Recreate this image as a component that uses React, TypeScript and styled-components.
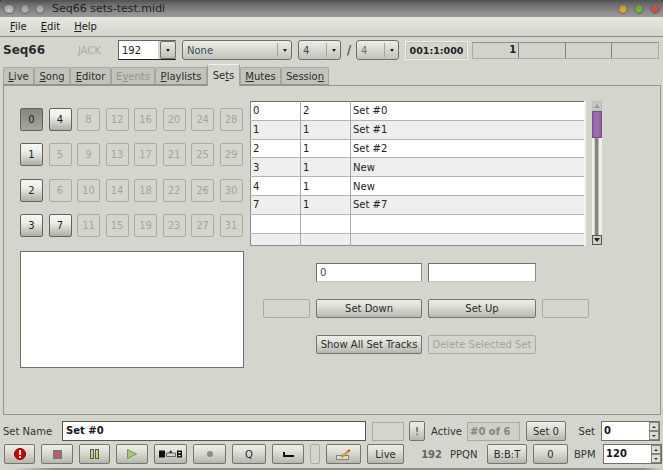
import React from 'react';
import styled, { createGlobalStyle } from 'styled-components';

const GlobalStyle = createGlobalStyle`
  html, body {
    margin: 0;
    padding: 0;
    background: #3c3c3a;
  }
  * {
    box-sizing: border-box;
  }
`;

const Window = styled.div`
  width: 663px;
  height: 470px;
  background: #d4d6ce;
  font-family: 'DejaVu Sans', sans-serif;
  font-size: 10px;
  color: #2e3436;
  border-radius: 5px 5px 0 0;
  overflow: hidden;
  display: flex;
  flex-direction: column;
`;

const TitleBar = styled.div`
  height: 17px;
  display: flex;
  align-items: center;
  padding: 0 3px;
  background: linear-gradient(#505050, #6c6c6c 25%, #8c8c8c 70%, #999);
  font-size: 11px;
  color: #1d1d1d;
`;

const DotGroup = styled.div<{ $gap: number }>`
  display: flex;
  gap: ${(p) => p.$gap}px;
`;

const TitleDot = styled.span<{ $w?: number; $color: string }>`
  width: ${(p) => p.$w ?? 10}px;
  height: 10px;
  border-radius: 5px;
  border: 1px solid #666;
  background: radial-gradient(circle at 50% 70%, ${(p) => p.$color}, #777 130%);
`;

const TitleText = styled.span`
  margin-left: 7px;
  flex: 1;
`;

const MenuBar = styled.div`
  height: 20px;
  display: flex;
  align-items: center;
  gap: 14px;
  padding: 0 10px;
  background: linear-gradient(#e6e7e1, #d3d5cc);
  border-bottom: 1px solid #8a8c85;
  color: #20201e;
`;

const TopRow = styled.div`
  height: 26px;
  display: flex;
  align-items: center;
`;

const AppName = styled.div`
  width: 75px;
  padding-left: 3px;
  font-size: 12px;
  font-weight: bold;
  color: #2b2b2b;
`;

const JackLabel = styled.div`
  width: 43px;
  color: #a9aba4;
  padding-left: 3px;
`;

const Combo = styled.div<{ $w: number; $muted?: boolean }>`
  width: ${(p) => p.$w}px;
  margin-right: 6px;
  height: 20px;
  display: flex;
  align-items: center;
  padding-left: 4px;
  border: 1px solid #6f716a;
  border-radius: 3px;
  background: linear-gradient(#eceee8, #c2c4ba);
  color: ${(p) => (p.$muted ? '#6b6f68' : '#3a4a55')};
`;

const ComboEdit = styled.div`
  width: 58px;
  height: 20px;
  margin-right: 6px;
  display: flex;
  border-top: 1px solid #63655f;
  border-left: 1px solid #63655f;
  border-bottom: 1px solid #222;
  background: linear-gradient(90deg, #fff 39px, #d4d6ce 39px);
  color: #222;
  align-items: center;
  padding-left: 3px;
`;

const ComboEditButton = styled.div`
  margin-left: auto;
  width: 16px;
  height: 18px;
  border: 1px solid #6f716a;
  border-radius: 2px;
  background: linear-gradient(#e8e9e3, #c0c2b8);
  display: flex;
  align-items: center;
  justify-content: center;
`;

const ComboText = styled.span`
  flex: 1;
`;

const ComboArrow = styled.span`
  width: 0;
  height: 0;
  border-left: 2.5px solid transparent;
  border-right: 2.5px solid transparent;
  border-top: 3px solid #222;
`;

const ComboButton = styled.span`
  width: 14px;
  height: 14px;
  border-left: 1px solid #a5a79f;
  display: flex;
  align-items: center;
  justify-content: center;
`;

const Slash = styled.span`
  width: 15px;
  margin-left: -6px;
  padding-left: 6px;
  margin-right: 0;
  font-size: 12px;
`;

const TimeBox = styled.div`
  width: 63px;
  height: 19px;
  margin-right: 4px;
  border: 1px solid #f0f0ec;
  outline: 1px solid #c4c6be;
  outline-offset: -2px;
  display: flex;
  align-items: center;
  justify-content: center;
  font-weight: bold;
  font-size: 9.5px;
  color: #222;
`;

const BeatBar = styled.div`
  width: 187px;
  height: 17px;
  display: grid;
  grid-template-columns: repeat(4, 1fr);
  border: 1px solid #a9aba4;
  border-top-color: #8f918a;
  background: #d2d4cc;
`;

const BeatCell = styled.div`
  border-right: 1px solid #7f817a;
  font-weight: bold;
  color: #222;
  text-align: right;
  padding-right: 2px;
  line-height: 14px;
  &:last-child {
    border-right: 0;
  }
`;

const TabBar = styled.div`
  height: 22px;
  padding-left: 3px;
  display: flex;
  align-items: flex-end;
  position: relative;
  z-index: 1;
`;

const Tab = styled.div<{ $w: number; $active?: boolean; $disabled?: boolean }>`
  width: ${(p) => p.$w}px;
  height: ${(p) => (p.$active ? 22 : 18)}px;
  margin-bottom: ${(p) => (p.$active ? -1 : 0)}px;
  display: flex;
  align-items: center;
  justify-content: center;
  background: ${(p) => (p.$active ? '#d4d6ce' : '#c2c4bb')};
  border: 1px solid ${(p) => (p.$active ? '#a0a29b' : '#a5a79f')};
  border-bottom: ${(p) => (p.$active ? '0' : '1px solid #8f918a')};
  border-top-color: ${(p) => (p.$active ? '#f2f2ee' : '#a5a79f')};
  border-radius: 2px 2px 0 0;
  color: ${(p) => (p.$disabled ? '#94968f' : '#2b2e2e')};
`;

const Panel = styled.div`
  height: 330px;
  margin: 0 2px 0 3px;
  padding: 15px 0 0 16px;
  border: 1px solid #94968f;
  display: flex;
  gap: 6px;
`;

const LeftColumn = styled.div`
  width: 224px;
  padding-top: 7px;
`;

const SetGrid = styled.div`
  display: grid;
  grid-template-columns: repeat(8, 23px);
  grid-template-rows: repeat(4, 23px);
  column-gap: 5.5px;
  row-gap: 12.3px;
  grid-auto-flow: column;
`;

const SetButton = styled.div<{ $state: 'on' | 'active' | 'off' }>`
  width: 23px;
  height: 23px;
  display: flex;
  align-items: center;
  justify-content: center;
  border-radius: 2px;
  border: 1px solid ${(p) => (p.$state === 'off' ? '#a9aba3' : '#62645d')};
  background: ${(p) =>
    p.$state === 'active'
      ? 'linear-gradient(#85877c, #a6a89e)'
      : p.$state === 'on'
        ? 'linear-gradient(#f6f7f3, #eeefea 35%, #aeb0a6)'
        : 'transparent'};
  color: ${(p) => (p.$state === 'off' ? '#a2a49d' : '#222')};
`;

const NotesBox = styled.div`
  height: 117px;
  margin-top: 14px;
  background: #fff;
  border: 1px solid #6f716a;
`;

const RightColumn = styled.div`
  width: 352px;
`;

const TableRow = styled.div`
  display: flex;
  gap: 6px;
`;

const SetTable = styled.table`
  width: 336px;
  height: 144px;
  table-layout: fixed;
  border-collapse: collapse;
  border: 1px solid #8a8c85;
  border-top-color: #6f716a;
  border-right-color: #6f716a;
  color: #222;
`;

const Row = styled.tr<{ $odd: boolean }>`
  background: ${(p) => (p.$odd ? '#eeeeee' : '#ffffff')};
  height: 18.8px;
  border-bottom: 1px solid #b4b4b4;
  &:last-child {
    height: 12px;
    border-bottom: 0;
  }
`;

const Cell = styled.td<{ $w?: number }>`
  width: ${(p) => (p.$w ? `${p.$w}px` : 'auto')};
  padding: 0 2px;
  border-right: 1px solid #a8a8a8;
  &:last-child {
    border-right: 2px solid #f4f4f2;
  }
`;

const ScrollBar = styled.div`
  width: 10px;
  height: 144px;
  display: flex;
  flex-direction: column;
  background: linear-gradient(90deg, #f0f0ec 20%, #868880 35%, #868880 60%, #f0f0ec 70%);
`;

const ScrollStep = styled.div<{ $disabled?: boolean }>`
  height: 10px;
  background: ${(p) => (p.$disabled ? '#c8cac2' : '#d0d2ca')};
  border: 1px solid ${(p) => (p.$disabled ? '#bbbdb5' : '#55574f')};
  display: flex;
  align-items: center;
  justify-content: center;
`;

const ScrollThumb = styled.div`
  height: 27px;
  background: linear-gradient(90deg, #8f5f9f, #a06fae 50%, #8f5f9f);
  border: 1px solid #7a5088;
`;

const ScrollFill = styled.div`
  flex: 1;
`;

const ArrowGlyph = styled.span<{ $up?: boolean; $light?: boolean }>`
  width: 0;
  height: 0;
  border-left: 3px solid transparent;
  border-right: 3px solid transparent;
  ${(p) => (p.$up ? 'border-bottom' : 'border-top')}: 4px solid ${(p) => (p.$light ? '#9a9c94' : '#222')};
`;

const FormGrid = styled.div`
  margin: 17px 0 0 13px;
  display: grid;
  grid-template-columns: 47px 106px 108px 47px;
  grid-auto-rows: 19px;
  column-gap: 6px;
  row-gap: 17px;
  width: 336px;
`;

const Field = styled.div<{ $col: number }>`
  grid-column: ${(p) => p.$col};
  height: 19px;
  background: #fff;
  border: 1px solid #6f716a;
  border-right-color: #8a8c85;
  border-bottom-color: #c8c8c2;
  padding-left: 3px;
  line-height: 17px;
  color: #4e4e44;
`;

const PushButton = styled.div<{ $col?: number; $disabled?: boolean; $w?: number; $h?: number }>`
  ${(p) => (p.$col ? `grid-column: ${p.$col};` : '')}
  ${(p) => (p.$w ? `width: ${p.$w}px; flex: none;` : '')}
  height: ${(p) => p.$h ?? 19}px;
  display: flex;
  align-items: center;
  justify-content: center;
  border-radius: 2px;
  border: 1px solid ${(p) => (p.$disabled ? '#a9aba3' : '#74766e')};
  background: ${(p) =>
    p.$disabled ? 'transparent' : 'linear-gradient(#edeee9, #dcded6 40%, #b6b8ae)'};
  color: ${(p) => (p.$disabled ? '#a2a49d' : '#2b2b2b')};
  white-space: nowrap;
`;

const BottomArea = styled.div`
  padding: 6px 3px 0 3px;
  display: flex;
  flex-direction: column;
  gap: 3px;
`;

const BottomEdge = styled.div`
  margin-top: auto;
  height: 2px;
  background: linear-gradient(90deg, #d4d6ce 2%, #8e8e88 8%, #8e8e88 97%, #d4d6ce);
`;

const BarRow = styled.div`
  display: flex;
  align-items: center;
  height: 20px;
`;

const Label = styled.span<{ $w: number; $mr?: number; $muted?: boolean; $bold?: boolean; $right?: boolean }>`
  width: ${(p) => p.$w}px;
  margin-right: ${(p) => p.$mr ?? 0}px;
  flex: none;
  color: ${(p) => (p.$muted ? '#65675f' : '#2e3436')};
  font-weight: ${(p) => (p.$bold ? 'bold' : 'normal')};
  text-align: ${(p) => (p.$right ? 'right' : 'left')};
`;

const NameInput = styled.div`
  width: 304px;
  height: 20px;
  margin-right: 6px;
  background: #fff;
  border: 1px solid #55574f;
  padding-left: 3px;
  line-height: 18px;
  font-weight: bold;
  color: #16161c;
`;

const EmptyBox = styled.div<{ $w: number }>`
  width: ${(p) => p.$w}px;
  height: 19px;
  border: 1px solid #a9aba3;
  margin-right: 5px;
`;

const ActiveBox = styled.div`
  width: 53px;
  height: 19px;
  margin-right: 6px;
  border: 1px solid #a9aba3;
  background: #cfd1c9;
  font-weight: bold;
  line-height: 17px;
  padding-left: 2px;
  color: #85877f;
  white-space: nowrap;
`;

const Spin = styled.div`
  width: 59px;
  height: 20px;
  flex: none;
  margin-left: auto;
  display: flex;
  background: #fff;
  border: 1px solid #6f716a;
  font-weight: bold;
  line-height: 18px;
  padding-left: 2px;
  color: #16161c;
`;

const SpinValue = styled.span`
  flex: 1;
`;

const SpinButtons = styled.div`
  width: 10px;
  display: flex;
  flex-direction: column;
`;

const SpinStep = styled.div`
  flex: 1;
  border: 1px solid #85877f;
  background: #dcded6;
  display: flex;
  align-items: center;
  justify-content: center;
`;

const SpinArrow = styled.span<{ $up?: boolean }>`
  width: 0;
  height: 0;
  border-left: 2px solid transparent;
  border-right: 2px solid transparent;
  ${(p) => (p.$up ? 'border-bottom' : 'border-top')}: 2px solid #333;
`;

const Toolbar = styled(BarRow)`
  gap: 6px;
  padding-left: 1px;
`;

const setButtons = [...Array(32).keys()];
const activeSets = [1, 2, 3, 4, 7];

const rows = [
  ['0', '2', 'Set #0'],
  ['1', '1', 'Set #1'],
  ['2', '1', 'Set #2'],
  ['3', '1', 'New'],
  ['4', '1', 'New'],
  ['7', '1', 'Set #7'],
  ['', '', ''],
  ['', '', ''],
];

const tabs = [
  { w: 31, text: 'Live', key: 'L' },
  { w: 36, text: 'Song', key: 'S' },
  { w: 41, text: 'Editor', key: 'E' },
  { w: 44, text: 'Events', key: 'v', disabled: true },
  { w: 52, text: 'Playlists', key: 'P' },
  { w: 33, text: 'Sets', key: 't', active: true },
  { w: 41, text: 'Mutes', key: 'M' },
  { w: 48, text: 'Session', key: 'n' },
];

function Mnemonic({ text, letter }: { text: string; letter: string }) {
  const i = text.indexOf(letter);
  return (
    <span>
      {text.slice(0, i)}
      <u>{letter}</u>
      {text.slice(i + 1)}
    </span>
  );
}

function PanicIcon() {
  return (
    <svg width="12" height="12" viewBox="0 0 12 12">
      <circle cx="6" cy="6" r="5.5" fill="#d40000" stroke="#7a0000" />
      <rect x="5" y="2" width="2" height="5" fill="#fff" />
      <rect x="5" y="8" width="2" height="2" fill="#fff" />
    </svg>
  );
}

function StopIcon() {
  return (
    <svg width="9" height="9" viewBox="0 0 9 9">
      <rect x="0.5" y="0.5" width="8" height="8" fill="#b06068" stroke="#77776e" />
    </svg>
  );
}

function PauseIcon() {
  return (
    <svg width="9" height="10" viewBox="0 0 9 10">
      <rect x="0.5" y="0.5" width="3" height="9" fill="#d0d07a" stroke="#55574f" />
      <rect x="5.5" y="0.5" width="3" height="9" fill="#d0d07a" stroke="#55574f" />
    </svg>
  );
}

function PlayIcon() {
  return (
    <svg width="10" height="10" viewBox="0 0 10 10">
      <path d="M0.5 0.5 L9.5 5 L0.5 9.5 Z" fill="#a8c880" stroke="#7a9060" />
    </svg>
  );
}

function LoopIcon() {
  return (
    <svg width="23" height="8" viewBox="0 0 23 8">
      <rect x="0" y="0.5" width="6" height="7" fill="#111" />
      <rect x="18" y="0.5" width="5" height="7" fill="#111" />
      <rect x="19.5" y="2" width="2" height="1.2" fill="#fff" />
      <rect x="19.5" y="5" width="2" height="1.2" fill="#fff" />
      <path d="M7.5 6.5 H16.5 V3 H7.5 Z" fill="none" stroke="#66665e" />
      <path d="M12 0 L9.5 3 H13.5 Z" fill="#333" />
    </svg>
  );
}

function RecordIcon() {
  return (
    <svg width="6" height="6" viewBox="0 0 6 6">
      <circle cx="3" cy="3" r="3" fill="#8a8c84" />
    </svg>
  );
}

function OneShotIcon() {
  return (
    <svg width="11" height="5" viewBox="0 0 11 5">
      <path d="M0 0 H2 V3 H11 V5 H0 Z" fill="#111" />
    </svg>
  );
}

function PencilIcon() {
  return (
    <svg width="15" height="11" viewBox="0 0 15 11">
      <rect x="0.5" y="6.5" width="12" height="4" fill="#dadad2" stroke="#85857c" />
      <path d="M5 7.5 L11.5 1.5 L13 3 L6.5 8.5 Z" fill="#e0a830" stroke="#8a6a20" strokeWidth="0.5" />
      <path d="M11.5 1.5 L13 0.2 L14.7 1.6 L13 3 Z" fill="#c84040" />
    </svg>
  );
}

export default function App() {
  return (
    <Window>
      <GlobalStyle />
      <TitleBar>
        <DotGroup $gap={5}>
          <TitleDot $w={12} $color="#c8c8c8" />
          <TitleDot $color="#b8b8b8" />
          <TitleDot $color="#b8b8b8" />
        </DotGroup>
        <TitleText>Seq66 sets-test.midi</TitleText>
        <DotGroup $gap={6}>
          <TitleDot $color="#f0b020" />
          <TitleDot $color="#70c020" />
          <TitleDot $color="#e04040" />
        </DotGroup>
      </TitleBar>
      <MenuBar>
        <Mnemonic text="File" letter="F" />
        <Mnemonic text="Edit" letter="E" />
        <Mnemonic text="Help" letter="H" />
      </MenuBar>
      <TopRow>
        <AppName>Seq66</AppName>
        <JackLabel>JACK</JackLabel>
        <ComboEdit>
          192
          <ComboEditButton>
            <ComboArrow />
          </ComboEditButton>
        </ComboEdit>
        <Combo $w={110}>
          <ComboText>None</ComboText>
          <ComboButton>
            <ComboArrow />
          </ComboButton>
        </Combo>
        <Combo $w={43}>
          <ComboText>4</ComboText>
          <ComboButton>
            <ComboArrow />
          </ComboButton>
        </Combo>
        <Slash>/</Slash>
        <Combo $w={43} $muted>
          <ComboText>4</ComboText>
          <ComboButton>
            <ComboArrow />
          </ComboButton>
        </Combo>
        <TimeBox>001:1:000</TimeBox>
        <BeatBar>
          <BeatCell>1</BeatCell>
          <BeatCell />
          <BeatCell />
          <BeatCell />
        </BeatBar>
      </TopRow>
      <TabBar>
        {tabs.map((t) => (
          <Tab key={t.text} $w={t.w} $active={t.active} $disabled={t.disabled}>
            <Mnemonic text={t.text} letter={t.key} />
          </Tab>
        ))}
      </TabBar>
      <Panel>
        <LeftColumn>
          <SetGrid>
            {setButtons.map((n) => (
              <SetButton
                key={n}
                $state={n === 0 ? 'active' : activeSets.includes(n) ? 'on' : 'off'}
              >
                {n}
              </SetButton>
            ))}
          </SetGrid>
          <NotesBox />
        </LeftColumn>
        <RightColumn>
          <TableRow>
            <SetTable>
              <tbody>
                {rows.map((r, i) => (
                  <Row key={i} $odd={i % 2 === 1}>
                    <Cell $w={50}>{r[0]}</Cell>
                    <Cell $w={50}>{r[1]}</Cell>
                    <Cell>{r[2]}</Cell>
                  </Row>
                ))}
              </tbody>
            </SetTable>
            <ScrollBar>
              <ScrollStep $disabled>
                <ArrowGlyph $up $light />
              </ScrollStep>
              <ScrollThumb />
              <ScrollFill />
              <ScrollStep>
                <ArrowGlyph />
              </ScrollStep>
            </ScrollBar>
          </TableRow>
          <FormGrid>
            <Field $col={2}>0</Field>
            <Field $col={3} />
            <PushButton $col={1} $disabled />
            <PushButton $col={2}>Set Down</PushButton>
            <PushButton $col={3}>Set Up</PushButton>
            <PushButton $col={4} $disabled />
            <PushButton $col={2}>Show All Set Tracks</PushButton>
            <PushButton $col={3} $disabled>
              Delete Selected Set
            </PushButton>
          </FormGrid>
        </RightColumn>
      </Panel>
      <BottomArea>
        <BarRow>
          <Label $w={59}>Set Name</Label>
          <NameInput>Set #0</NameInput>
          <EmptyBox $w={32} />
          <PushButton $w={16} $h={20}>
            !
          </PushButton>
          <Label $w={37} $mr={5} $right>
            Active
          </Label>
          <ActiveBox>#0 of 6</ActiveBox>
          <PushButton $w={40} $h={20}>
            Set 0
          </PushButton>
          <Label $w={29} $right>
            Set
          </Label>
          <Spin>
            <SpinValue>0</SpinValue>
            <SpinButtons>
              <SpinStep>
                <SpinArrow $up />
              </SpinStep>
              <SpinStep>
                <SpinArrow />
              </SpinStep>
            </SpinButtons>
          </Spin>
        </BarRow>
        <Toolbar>
          <PushButton $w={31} $h={20}>
            <PanicIcon />
          </PushButton>
          <PushButton $w={32} $h={20}>
            <StopIcon />
          </PushButton>
          <PushButton $w={31} $h={20}>
            <PauseIcon />
          </PushButton>
          <PushButton $w={32} $h={20}>
            <PlayIcon />
          </PushButton>
          <PushButton $w={33} $h={20}>
            <LoopIcon />
          </PushButton>
          <PushButton $w={33} $h={20}>
            <RecordIcon />
          </PushButton>
          <PushButton $w={34} $h={20}>
            Q
          </PushButton>
          <PushButton $w={32} $h={20}>
            <OneShotIcon />
          </PushButton>
          <PushButton $w={10} $h={20} $disabled />
          <PushButton $w={35} $h={20}>
            <PencilIcon />
          </PushButton>
          <PushButton $w={37} $h={20}>
            Live
          </PushButton>
          <Label $w={32} $mr={2} $muted $bold $right>
            192
          </Label>
          <Label $w={31}>PPQN</Label>
          <PushButton $w={40} $h={20}>
            B:B:T
          </PushButton>
          <PushButton $w={35} $h={20}>
            0
          </PushButton>
          <Label $w={23}>BPM</Label>
          <Spin>
            <SpinValue>120</SpinValue>
            <SpinButtons>
              <SpinStep>
                <SpinArrow $up />
              </SpinStep>
              <SpinStep>
                <SpinArrow />
              </SpinStep>
            </SpinButtons>
          </Spin>
        </Toolbar>
      </BottomArea>
      <BottomEdge />
    </Window>
  );
}
